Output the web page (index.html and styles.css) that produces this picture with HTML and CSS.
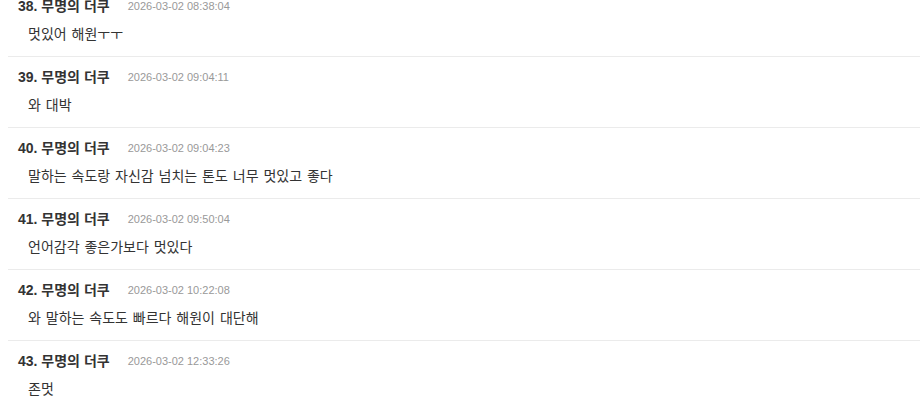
FILE: index.html
```html
<!DOCTYPE html>
<html lang="ko">
<head>
<meta charset="utf-8">
<link rel="stylesheet" href="styles.css">
</head>
<body>
<ul class="comments">
  <li class="comment">
    <div class="meta"><span class="name">38. 무명의 더쿠</span><span class="date">2026-03-02 08:38:04</span></div>
    <div class="text">멋있어 해원ㅜㅜ</div>
  </li>
  <li class="comment">
    <div class="meta"><span class="name">39. 무명의 더쿠</span><span class="date">2026-03-02 09:04:11</span></div>
    <div class="text">와 대박</div>
  </li>
  <li class="comment">
    <div class="meta"><span class="name">40. 무명의 더쿠</span><span class="date">2026-03-02 09:04:23</span></div>
    <div class="text">말하는 속도랑 자신감 넘치는 톤도 너무 멋있고 좋다</div>
  </li>
  <li class="comment">
    <div class="meta"><span class="name">41. 무명의 더쿠</span><span class="date">2026-03-02 09:50:04</span></div>
    <div class="text">언어감각 좋은가보다 멋있다</div>
  </li>
  <li class="comment">
    <div class="meta"><span class="name">42. 무명의 더쿠</span><span class="date">2026-03-02 10:22:08</span></div>
    <div class="text">와 말하는 속도도 빠르다 해원이 대단해</div>
  </li>
  <li class="comment">
    <div class="meta"><span class="name">43. 무명의 더쿠</span><span class="date">2026-03-02 12:33:26</span></div>
    <div class="text">존멋</div>
  </li>
</ul>
</body>
</html>
```

FILE: styles.css
```css
html, body {
  margin: 0;
  padding: 0;
  background: #fff;
  overflow: hidden;
}
body {
  padding-left: 8px;
  font-family: "Liberation Sans", "Noto Sans CJK KR", sans-serif;
  color: #333;
}
.comments {
  list-style: none;
  margin: -14px 0 0 0;
  padding: 0;
}
.comment {
  padding: 12px 10px;
  border-bottom: 1px solid #ebebeb;
}
.meta {
  display: flex;
  align-items: center;
  height: 16px;
  line-height: 16px;
}
.name {
  font-size: 14px;
  font-weight: bold;
  color: #333;
}
.date {
  margin-left: 18px;
  font-size: 11px;
  color: #999;
}
.text {
  margin-top: 10px;
  padding-left: 10px;
  font-size: 14px;
  word-spacing: 1px;
  height: 20px;
  line-height: 20px;
  color: #333;
}
```
